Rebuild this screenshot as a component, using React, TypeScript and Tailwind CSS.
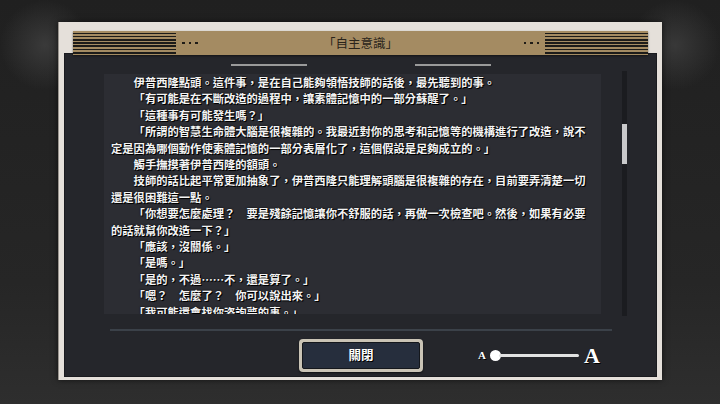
import React from "react";

const lines: { text: string; indent?: boolean }[] = [
  { text: "伊普西隆點頭。這件事，是在自己能夠領悟技師的話後，最先聽到的事。", indent: true },
  { text: "「有可能是在不斷改造的過程中，讓素體記憶中的一部分蘇醒了。」", indent: true },
  { text: "「這種事有可能發生嗎？」", indent: true },
  { text: "「所謂的智慧生命體大腦是很複雜的。我最近對你的思考和記憶等的機構進行了改造，說不", indent: true },
  { text: "定是因為哪個動作使素體記憶的一部分表層化了，這個假設是足夠成立的。」" },
  { text: "觸手撫摸著伊普西隆的額頭。", indent: true },
  { text: "技師的話比起平常更加抽象了，伊普西隆只能理解頭腦是很複雜的存在，目前要弄清楚一切", indent: true },
  { text: "還是很困難這一點。" },
  { text: "「你想要怎麼處理？　要是殘餘記憶讓你不舒服的話，再做一次檢查吧。然後，如果有必要", indent: true },
  { text: "的話就幫你改造一下？」" },
  { text: "「應該，沒關係。」", indent: true },
  { text: "「是嗎。」", indent: true },
  { text: "「是的，不過……不，還是算了。」", indent: true },
  { text: "「嗯？　怎麼了？　你可以說出來。」", indent: true },
  { text: "「我可能還會找你咨詢夢的事。」", indent: true },
];

function Stripes() {
  return (
    <div className="flex flex-col justify-between w-[103px] h-full py-[1.5px]">
      {Array.from({ length: 7 }).map((_, i) => (
        <div key={i} className="h-[1.7px] bg-[#1c1b19]" />
      ))}
    </div>
  );
}

function Dots() {
  return (
    <div className="flex gap-[4px]">
      <span className="w-[2.5px] h-[2.5px] bg-[#1f1c17]" />
      <span className="w-[2.5px] h-[2.5px] bg-[#1f1c17]" />
      <span className="w-[2.5px] h-[2.5px] bg-[#1f1c17]" />
    </div>
  );
}

export default function App() {
  return (
    <div className="w-[720px] h-[404px] overflow-hidden bg-[#232323] bg-[radial-gradient(circle_at_45px_45px,#3a3a3a_0px,transparent_45px),radial-gradient(circle_at_675px_45px,#383838_0px,transparent_45px),linear-gradient(to_bottom,#202020,#262626_70%,#2e2e2e)] pt-[22px] font-['Noto_Sans_CJK_TC',sans-serif]">
      <div className="ml-[58px] w-[604px] h-[358px] bg-[#e5e0da] pt-[9px] px-[5px] pb-[3px] flex flex-col shadow-[0_0_6px_rgba(0,0,0,0.6)] border-l border-[#9a958f]">
        {/* title bar */}
        <div className="relative z-10 mx-[9px] -mb-[2px] h-[24px] bg-[#a48b62] flex items-center shadow-[0_1px_2px_rgba(0,0,0,0.5)]">
          <Stripes />
          <div className="ml-[6px]">
            <Dots />
          </div>
          <div className="flex-1 text-center text-[12.5px] text-[#2a241b] leading-none">「自主意識」</div>
          <div className="mr-[6px]">
            <Dots />
          </div>
          <Stripes />
        </div>

        {/* dark panel */}
        <div className="flex-1 bg-[#25262b] pt-[10px] flex flex-col border border-[#1a1b1f]">
          <div className="flex ml-[166px] gap-[108px]">
            <div className="w-[76px] h-[1.5px] bg-[#9a9a9a]" />
            <div className="w-[76px] h-[1.5px] bg-[#9a9a9a]" />
          </div>

          <div className="flex mt-[8.5px] ml-[39px]">
            <div className="w-[497px] h-[240px] bg-[#2c2d33] overflow-hidden pl-[7px]">
              {lines.map((l, i) => (
                <div
                  key={i}
                  className={`whitespace-nowrap text-[11.3px] leading-[16.4px] font-bold text-[#f4f4f4] [text-shadow:1px_1px_0_#000,0_0_2px_#000] ${l.indent ? "pl-[22.6px]" : ""}`}>
                  {l.text}
                </div>
              ))}
            </div>
            <div className="ml-[21px] w-[5px] h-[245px] -mt-[3px] -mb-[2px] bg-[#1b1c20] flex flex-col">
              <div className="mt-[53px] h-[40px] bg-[#c9c9cb]" />
            </div>
          </div>

          <div className="mt-[15px] ml-[45px] w-[502px] h-[2px] bg-[#3b4149]" />

          <div className="flex items-center mt-[8px] ml-[234px]">
            <div className="w-[124px] h-[33px] rounded-[4px] bg-[#cac4b6] p-[3px] shadow-[0_1px_2px_rgba(0,0,0,0.6)]">
              <div className="w-full h-full rounded-[2px] bg-[#262e3d] border border-[#14171c] flex items-center justify-center text-[12.5px] font-bold text-white [text-shadow:1px_1px_0_#000]">
                關閉
              </div>
            </div>

            <div className="ml-[55px] flex items-center font-['Liberation_Serif',serif] font-bold text-white [text-shadow:1px_1px_0_#000]">
              <span className="text-[11px] leading-none">A</span>
              <span className="ml-[4px] w-[11px] h-[11px] rounded-full bg-white shrink-0" />
              <span className="-ml-[2px] w-[80px] h-[3px] rounded-full bg-[#e2e2e2]" />
              <span className="ml-[5px] text-[22px] leading-none">A</span>
            </div>
          </div>
        </div>
      </div>
    </div>
  );
}
